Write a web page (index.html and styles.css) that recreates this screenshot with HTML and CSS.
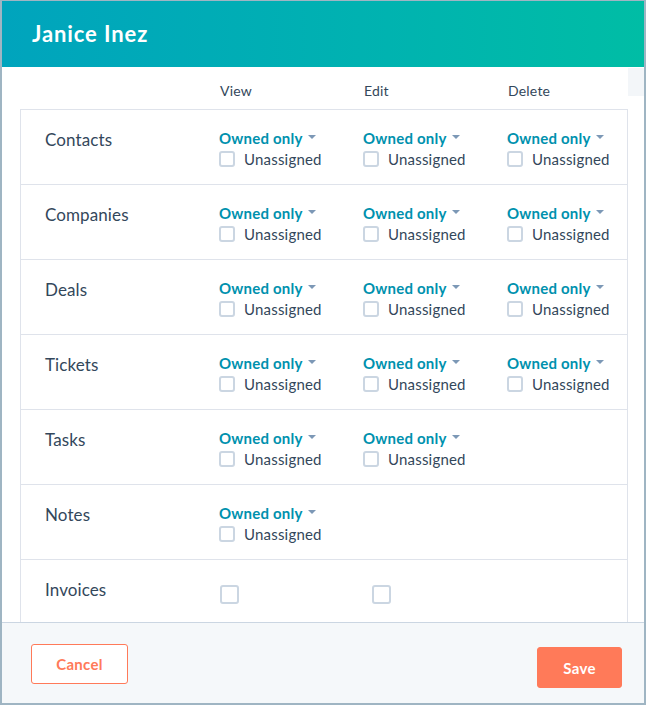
FILE: index.html
```html
<!DOCTYPE html>
<html lang="en">
<head>
<meta charset="utf-8">
<title>Janice Inez</title>
<link rel="stylesheet" href="styles.css">
</head>
<body>
<div class="modal">
  <header class="modal-header"><h1 class="title">Janice Inez</h1></header>
  <div class="modal-body">
    <div class="main">
      <div class="grid col-head">
        <div></div><div>View</div><div>Edit</div><div>Delete</div>
      </div>
      <div class="table">
        <div class="grid row">
          <div class="label">Contacts</div>
          <div class="cell"><div class="owned">Owned only<span class="caret"></span></div><div class="un"><span class="cb"></span>Unassigned</div></div>
          <div class="cell"><div class="owned">Owned only<span class="caret"></span></div><div class="un"><span class="cb"></span>Unassigned</div></div>
          <div class="cell"><div class="owned">Owned only<span class="caret"></span></div><div class="un"><span class="cb"></span>Unassigned</div></div>
        </div>
        <div class="grid row">
          <div class="label">Companies</div>
          <div class="cell"><div class="owned">Owned only<span class="caret"></span></div><div class="un"><span class="cb"></span>Unassigned</div></div>
          <div class="cell"><div class="owned">Owned only<span class="caret"></span></div><div class="un"><span class="cb"></span>Unassigned</div></div>
          <div class="cell"><div class="owned">Owned only<span class="caret"></span></div><div class="un"><span class="cb"></span>Unassigned</div></div>
        </div>
        <div class="grid row">
          <div class="label">Deals</div>
          <div class="cell"><div class="owned">Owned only<span class="caret"></span></div><div class="un"><span class="cb"></span>Unassigned</div></div>
          <div class="cell"><div class="owned">Owned only<span class="caret"></span></div><div class="un"><span class="cb"></span>Unassigned</div></div>
          <div class="cell"><div class="owned">Owned only<span class="caret"></span></div><div class="un"><span class="cb"></span>Unassigned</div></div>
        </div>
        <div class="grid row">
          <div class="label">Tickets</div>
          <div class="cell"><div class="owned">Owned only<span class="caret"></span></div><div class="un"><span class="cb"></span>Unassigned</div></div>
          <div class="cell"><div class="owned">Owned only<span class="caret"></span></div><div class="un"><span class="cb"></span>Unassigned</div></div>
          <div class="cell"><div class="owned">Owned only<span class="caret"></span></div><div class="un"><span class="cb"></span>Unassigned</div></div>
        </div>
        <div class="grid row">
          <div class="label">Tasks</div>
          <div class="cell"><div class="owned">Owned only<span class="caret"></span></div><div class="un"><span class="cb"></span>Unassigned</div></div>
          <div class="cell"><div class="owned">Owned only<span class="caret"></span></div><div class="un"><span class="cb"></span>Unassigned</div></div>
          <div></div>
        </div>
        <div class="grid row">
          <div class="label">Notes</div>
          <div class="cell"><div class="owned">Owned only<span class="caret"></span></div><div class="un"><span class="cb"></span>Unassigned</div></div>
          <div></div><div></div>
        </div>
        <div class="grid row last">
          <div class="label">Invoices</div>
          <div class="cell"><span class="cb big"></span></div>
          <div class="cell"><span class="cb big shifted"></span></div>
          <div></div>
        </div>
      </div>
    </div>
    <div class="track"><div class="thumb"></div></div>
  </div>
  <footer class="modal-footer">
    <button class="btn cancel">Cancel</button>
    <button class="btn save">Save</button>
  </footer>
</div>
</body>
</html>
```
FILE: styles.css
```css
* { box-sizing: border-box; }
html, body { margin: 0; padding: 0; background: #fff; }
body { font-family: "Lato", "Open Sans", sans-serif; color: #33475b; }

.modal {
  width: 646px;
  height: 705px;
  border: 2px solid #9fb5c3;
  border-top-width: 1px;
  display: flex;
  flex-direction: column;
  overflow: hidden;
}

.modal-header {
  height: 66px;
  flex: none;
  background: linear-gradient(90deg, #00a4bd 0%, #00b3b0 60%, #00bda5 100%);
  display: flex;
  align-items: center;
  padding-left: 30px;
}
.title {
  margin: 0;
  color: #fff;
  font-size: 22px;
  font-weight: 700;
  letter-spacing: 0.9px;
  padding-bottom: 2px;
}

.modal-body {
  flex: 1;
  display: flex;
  overflow: hidden;
  background: #fff;
}
.main { flex: 1; padding-left: 18px; }
.track { width: 16px; flex: none; }
.thumb { height: 28px; background: #f3f6f9; margin-top: 1px; }

.grid {
  display: grid;
  grid-template-columns: 174px 144px 144px 1fr;
}
.col-head {
  height: 42px;
  padding: 14px 0 0 25px;
  font-size: 14px;
  line-height: 20px;
  letter-spacing: 0.2px;
}
.col-head > div { padding-left: 1px; }

.table {
  width: 608px;
  border: 1px solid #dfe3eb;
  border-bottom: none;
}
.row {
  height: 75px;
  border-bottom: 1px solid #dfe3eb;
  padding: 20px 0 0 24px;
}
.row.last { border-bottom: none; height: 80px; }
.label { font-size: 17px; line-height: 20px; letter-spacing: 0.1px; }

.cell { margin-top: -2px; }
.owned {
  color: #0091ae;
  font-weight: 700;
  font-size: 15px;
  line-height: 20px;
  display: flex;
  align-items: center;
  letter-spacing: 0.2px;
}
.caret {
  width: 0; height: 0;
  border-left: 4px solid transparent;
  border-right: 4px solid transparent;
  border-top: 4px solid #7c98b6;
  margin-left: 5px;
  margin-top: -2px;
}
.un {
  display: flex;
  align-items: center;
  font-size: 15px;
  line-height: 22px;
  margin-top: 0;
  letter-spacing: 0.2px;
}
.cb {
  width: 16px;
  height: 16px;
  border: 2px solid #cbd6e2;
  border-radius: 3px;
  background: #fff;
  margin-right: 9px;
  display: inline-block;
  flex: none;
}
.cb.big {
  width: 19px;
  height: 19px;
  margin-top: 7px;
  margin-left: 1px;
}
.cb.big.shifted { margin-left: 9px; }

.modal-footer {
  height: 81px;
  flex: none;
  background: #f5f8fa;
  border-top: 1px solid #cbd6e2;
  display: flex;
  justify-content: space-between;
  align-items: flex-start;
  padding: 21px 22px 0 29px;
}
.btn {
  font-family: "Lato", sans-serif;
  font-weight: 700;
  font-size: 15px;
  border-radius: 3px;
  cursor: pointer;
  letter-spacing: 0.3px;
}
.cancel {
  width: 97px;
  height: 40px;
  background: #fff;
  border: 1px solid #ff7a59;
  color: #ff7a59;
}
.save {
  width: 85px;
  height: 41px;
  margin-top: 3px;
  background: #ff7a59;
  border: 1px solid #ff7a59;
  color: #fff;
}
```
